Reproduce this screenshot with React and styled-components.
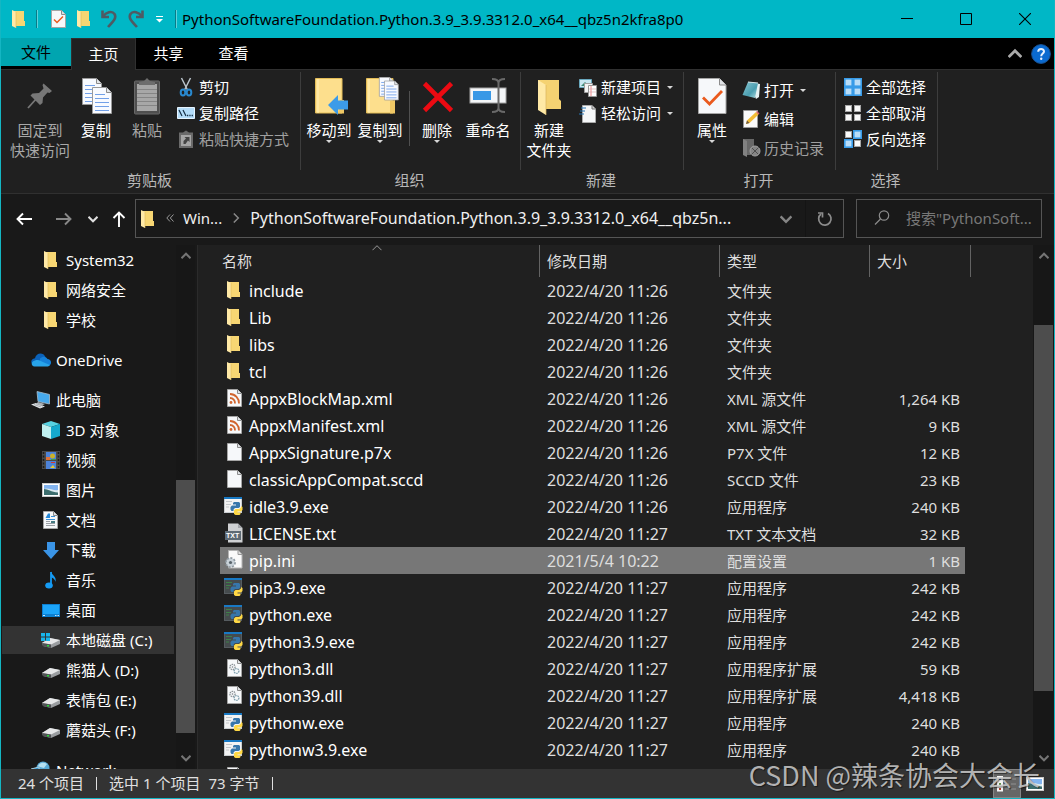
import React from "react";
import styled, { createGlobalStyle } from "styled-components";

const GlobalStyle = createGlobalStyle`
  *, *::before, *::after { box-sizing: border-box; }
  html, body { margin: 0; background: #191919; }
  body, button, input, table { font: 15px/20px "Noto Sans", "Noto Sans CJK SC", sans-serif; }
  button { margin: 0; padding: 0; border: 0; background: none; color: inherit; cursor: default; }
  svg { display: block; flex: none; }
`;

/* ---------- icons ---------- */

const Folder = ({ w = 13, h = 18 }) => (
  <svg width={w} height={h} viewBox="0 0 13 18">
    <path d="M0 1H12V11H13V16H0Z" fill="#f7d673" />
    <path d="M0 0L4 2V18L0 16Z" fill="#ffe9a6" />
    <path d="M4 2V18" stroke="#dcb85a" strokeWidth="0.6" />
  </svg>
);

const Page = ({ w = 15, h = 18, children }) => (
  <svg width={w} height={h} viewBox="0 0 15 18" preserveAspectRatio="none">
    <path d="M0.5 0.5H10.5L14.5 4.5V17.5H0.5Z" fill="#f6f8fa" stroke="#a5a5a5" />
    <path d="M10.5 0.5V4.5H14.5" fill="#dfe2e5" stroke="#8c8c8c" />
    {children}
  </svg>
);

const CheckPage = () => (
  <Page>
    <path d="M3 9.5L6 12.5L12 6.5" fill="none" stroke="#ea5a1d" strokeWidth="1.5" />
  </Page>
);

const PropertiesIcon = () => (
  <svg width="29" height="38" viewBox="0 0 29 38">
    <path d="M0.5 1.5H21.5L28 8V36.5H0.5Z" fill="#f6f8fa" stroke="#a5a5a5" />
    <path d="M21.5 1.5V8H28" fill="#dfe2e5" stroke="#8c8c8c" />
    <path d="M5 20.5L11.500 27L24 14" fill="none" stroke="#ea5a1d" strokeWidth="2.800" />
  </svg>
);

const Undo = ({ flip }) => (
  <svg width="16" height="18" viewBox="0 0 16 18">
    <g transform={flip ? "translate(16 0) scale(-1 1)" : undefined} fill="none" stroke="#4f5a63" strokeWidth="2.6">
      <path d="M1.5 0.5V7H8" />
      <path d="M2 6.5C5 2 11 0.5 13.5 4C16 8 12 11.5 7 17" />
    </g>
  </svg>
);

const CustomizeIcon = () => (
  <svg width="9" height="7" viewBox="0 0 9 7">
    <path d="M1 0.5H8" stroke="#fff" />
    <path d="M1 3H8L4.5 6.5Z" fill="#fff" />
  </svg>
);

const Minimize = () => (
  <svg width="12" height="12" viewBox="0 0 12 12"><path d="M0 5.5H12" stroke="#000" /></svg>
);
const Maximize = () => (
  <svg width="12" height="12" viewBox="0 0 12 12"><path d="M0.5 0.5H11.5V11.5H0.5Z" fill="none" stroke="#000" /></svg>
);
const Close = () => (
  <svg width="12" height="12" viewBox="0 0 12 12"><path d="M0 0L12 12M12 0L0 12" stroke="#000" strokeWidth="1.1" /></svg>
);

const Chevron = ({ dir = "down", color = "#ccc", size = 10, weight = 2 }) => {
  const turn = { down: 0, up: 180, right: 270 }[dir];
  return (
    <svg width={size} height={size} viewBox="0 0 10 10">
      <path d="M0.5 2.8L5 7.3L9.5 2.8" transform={`rotate(${turn} 5 5)`} fill="none" stroke={color} strokeWidth={weight} />
    </svg>
  );
};

const Help = () => (
  <svg width="20" height="20" viewBox="0 0 20 20">
    <circle cx="10" cy="10" r="9.4" fill="#0a6ad0" stroke="#1b5190" />
    <path d="M7.2 7.8C7.2 4 13 4.2 13 7.5C13 9.5 10.2 9.8 10.2 12.2" fill="none" stroke="#e8f2ff" strokeWidth="2" />
    <circle cx="10.2" cy="14.8" r="1.2" fill="#e8f2ff" />
  </svg>
);

const Pin = () => (
  <svg width="26" height="38" viewBox="0 0 26 38">
    <path d="M1 31L10 21" stroke="#777" strokeWidth="1.8" />
    <path d="M16.5 6.5L25 14L22.5 16L20.5 15.5L16 20.5L15.5 26L13 28L3.5 18.5L5.5 16.5L12 16L16.5 11.5L15.5 8Z" fill="#777" />
  </svg>
);

const DocLines = ({ x, y }) => (
  <g transform={`translate(${x} ${y})`}>
    <path d="M0.5 0.5H14.5L19.5 5.5V26.5H0.5Z" fill="#f8faff" stroke="#9a9a9a" />
    <path d="M14.5 0.5V5.5H19.5" fill="#e3e6ea" stroke="#8a8a8a" />
    <path d="M3 7.5H13M3 11.5H17M3 15.5H17M3 19.5H17M3 23.5H17" stroke="#72a0e8" strokeWidth="1.2" />
  </g>
);
const CopyIcon = () => (
  <svg width="34" height="38" viewBox="-2 0 34 38"><DocLines x={1} y={1} /><DocLines x={11} y={10} /></svg>
);

const PasteIcon = () => (
  <svg width="28" height="38" viewBox="0 0 28 38">
    <rect x="1.500" y="4" width="25" height="33" rx="1" fill="#4f4f4f" stroke="#686868" />
    <rect x="4" y="7" width="20" height="27" fill="#a7a7a7" />
    <path d="M4 12.5H24M4 16.5H24M4 20.5H24M4 24.5H24M4 28.5H24" stroke="#858585" />
    <path d="M6 8V5L11 4L14 1L17 4L22 5V8Z" fill="#6d6d6d" />
  </svg>
);

const Scissors = () => (
  <svg width="18" height="20" viewBox="0 0 18 20">
    <path d="M4.5 1L10.5 13M13.5 1L7.5 13" stroke="#b9c3cb" strokeWidth="1.5" />
    <ellipse cx="6" cy="15.5" rx="2.3" ry="3" fill="none" stroke="#2989cf" strokeWidth="2" />
    <ellipse cx="12" cy="15.5" rx="2.3" ry="3" fill="none" stroke="#2989cf" strokeWidth="2" />
  </svg>
);
const PathIcon = () => (
  <svg width="18" height="12" viewBox="0 0 18 12">
    <path d="M0.5 0.5H17.5V11.5H0.5Z" fill="#b4dcf8" stroke="#e6f4ff" />
    <path d="M2 3L5 9M6 3L9 9" stroke="#173045" strokeWidth="1.2" />
    <path d="M10 8.5H11.3M12.3 8.5H13.6M14.6 8.5H15.9" stroke="#173045" strokeWidth="1.4" />
  </svg>
);
const PasteLink = () => (
  <svg width="18" height="18" viewBox="0 0 18 18">
    <path d="M2 2.5H6L9 0.5L12 2.5H16V18H2Z" fill="#6a6a6a" />
    <path d="M4 5H14V16H4Z" fill="#a5a5a5" />
    <path d="M6.500 14V11L9 8.500L7.500 7H12.500V12L11 10.500L8.500 14Z" fill="#444" />
  </svg>
);

const BigFolderMove = () => (
  <svg width="38" height="38" viewBox="-4 0 38 38">
    <path d="M1.5 1.5H28V36H1.5Z" fill="#fddf8d" stroke="#e3bc57" />
    <path d="M4 2V36" stroke="#fff0b8" />
    <path d="M26 23H30V36.5H24" fill="#efc865" />
    <path d="M14 28L24 18V23.500H34V32.500H24V38Z" fill="#3c9be8" />
  </svg>
);
const BigFolderCopy = () => (
  <svg width="38" height="38" viewBox="-4 0 38 38">
    <path d="M1.500 1.500H28V36H1.500Z" fill="#fddf8d" stroke="#e3bc57" />
    <path d="M4 2V36" stroke="#fff0b8" />
    <path d="M25 24L30 23V36.500H25Z" fill="#efc865" />
    <g transform="translate(14 0) scale(0.73)"><DocLines x={0} y={0} /><DocLines x={7} y={5} /></g>
  </svg>
);
const DeleteIcon = () => (
  <svg width="32" height="38" viewBox="0 0 32 38">
    <path d="M3.500 6.500L30.500 33.500M30.500 6.500L3.500 33.500" stroke="#ec0a12" strokeWidth="4.600" />
  </svg>
);
const RenameIcon = () => (
  <svg width="38" height="38" viewBox="0 0 38 38">
    <rect x="1" y="11" width="36" height="15" fill="#f4f6f8" stroke="#a3a3a3" />
    <rect x="4" y="14" width="18" height="9" fill="#3898e6" />
    <path d="M29.500 4V33M23 2C27 2 29.500 3.500 29.500 6C29.500 3.500 32 2 36 2M23 35C27 35 29.500 33.500 29.500 31C29.500 33.500 32 35 36 35" fill="none" stroke="#696969" strokeWidth="2" />
  </svg>
);
const NewFolderIcon = () => (
  <svg width="26" height="38" viewBox="0 0 26 38">
    <path d="M2 3H23V22L25 24V32H2Z" fill="#f5d272" />
    <path d="M2 3L10 8V38L2 33Z" fill="#ffe9a6" />
    <path d="M10 8V38" stroke="#dab65b" strokeWidth="0.700" />
  </svg>
);
const NewItemIcon = () => (
  <svg width="18" height="19" viewBox="0 0 18 19">
    <path d="M0.500 1.500H12.500V9.500H0.500Z" fill="#c9e7f2" stroke="#68a7bd" />
    <path d="M2 8L6 4L10 8Z" fill="#3d8a75" />
    <path d="M5.500 5.500H13.500V14.500H5.500Z" fill="#f4f4f4" stroke="#a0a0a0" />
    <path d="M9.500 7.500H17.500V18.500H9.500Z" fill="#fff" stroke="#969696" />
    <path d="M12 8V18" stroke="#f0868a" />
    <path d="M10 11H17M10 14H17" stroke="#d8aeb0" strokeWidth="0.700" />
  </svg>
);
const EasyAccessIcon = () => (
  <svg width="18" height="19" viewBox="0 0 18 19">
    <path d="M3.500 1.500H13L16.500 5V18.500H3.500Z" fill="#f5f7f8" stroke="#aaa" />
    <path d="M13 1.500V5H16.500" fill="#d5d5d5" stroke="#777" />
    <path d="M2 4H7M1 7H6M0 10H5" stroke="#2776b5" strokeWidth="1.200" />
  </svg>
);
const OpenIcon = () => (
  <svg width="19" height="19" viewBox="0 0 19 19">
    <defs>
      <linearGradient id="bookFace" x2="1" y2="1"><stop stopColor="#8ac7d3" /><stop offset="0.600" stopColor="#4b9eb0" /><stop offset="1" stopColor="#b4e0e4" /></linearGradient>
    </defs>
    <path d="M7 1L18 3L17 16L14 18Z" fill="#e6f1f2" />
    <path d="M6 1L16 2L13 17L0.500 14Z" fill="url(#bookFace)" />
    <path d="M6 1L16 2" stroke="#d3e2e4" />
  </svg>
);
const EditIcon = () => (
  <svg width="18" height="18" viewBox="0 0 18 18">
    <path d="M1.500 0.500H15.500V17.500H1.500Z" fill="#fafafa" stroke="#999" />
    <path d="M4 14L5 10.500L14 2L16.500 4.500L7.500 13Z" fill="#f3bc35" />
    <path d="M14 2L15 1L17.500 3.500L16.500 4.500Z" fill="#dc5f68" />
    <path d="M4 14L5 10.500L7.500 13Z" fill="#6b5942" />
  </svg>
);
const HistoryIcon = () => (
  <svg width="19" height="18" viewBox="0 0 19 18">
    <path d="M1 0H12V16H1Z" fill="#686868" /><path d="M1 0L5 2V18L1 16Z" fill="#818181" />
    <circle cx="13" cy="12" r="5" fill="#858585" stroke="#a0a0a0" />
    <path d="M9.500 15.500L16.500 8.500M10 9L16 15" stroke="#4d4d4d" />
  </svg>
);
const Tiles = ({ on }) => (
  <svg width="18" height="18" viewBox="0 0 18 18">
    {[[0, 0], [9, 0], [0, 9], [9, 9]].map(([x, y], i) => (
      <rect key={i} x={x + (on[i] ? 0.8 : 1.5)} y={y + (on[i] ? 0.8 : 1.5)} width={on[i] ? 7.4 : 6} height={on[i] ? 7.4 : 6}
        fill={on[i] ? "#b9ddf8" : "#fafafa"} stroke={on[i] ? "#379be8" : "#a7a7a7"} strokeWidth={on[i] ? 1.6 : 1} />
    ))}
  </svg>
);

const Arrow = ({ dir, color = "#fff" }) => (
  <svg width="16" height="16" viewBox="0 0 16 16">
    <path d="M16 8H1.500M7 2.500L1.500 8L7 13.500" transform={`rotate(${{ left: 0, up: 90, right: 180 }[dir]} 8 8)`} fill="none" stroke={color} strokeWidth="1.900" />
  </svg>
);
const Refresh = () => (
  <svg width="16" height="16" viewBox="0 0 16 16">
    <path d="M11 2.500A6.200 6.200 0 1 1 4 3" fill="none" stroke="#8c8c8c" strokeWidth="1.700" />
    <path d="M1 2H5.500V6.500" fill="none" stroke="#8c8c8c" strokeWidth="1.700" />
  </svg>
);
const Magnifier = () => (
  <svg width="16" height="16" viewBox="0 0 16 16">
    <circle cx="10" cy="5.500" r="4.700" fill="none" stroke="#8c8c8c" strokeWidth="1.200" />
    <path d="M6.500 9L1 14.500" stroke="#8c8c8c" strokeWidth="1.300" />
  </svg>
);
const Earlier = () => (
  <svg width="8" height="8" viewBox="0 0 8 8"><path d="M4 0.500L0.800 4L4 7.500M7.500 0.500L4.300 4L7.500 7.500" fill="none" stroke="#999" /></svg>
);

const OneDriveIcon = () => (
  <svg width="20" height="14" viewBox="0 0 20 14">
    <path d="M4 12C-1 12 -1 5.500 4 5.200C5 0 12 -1.500 14.500 4L9 12Z" fill="#0b62b9" />
    <path d="M9 5.500C12 2.500 15.500 3.500 16.500 6C21 6 21.500 13 16.500 13H9Z" fill="#1580d8" />
    <path d="M3.500 13.500C-0.500 13 0 8 4 7.500C8 6 10 8.500 13 9.500L19 12C18 13.500 17 13.500 16 13.500Z" fill="#28a4ea" />
  </svg>
);
const PcIcon = () => (
  <svg width="20" height="18" viewBox="0 0 20 18">
    <path d="M6 0.500L18.500 3.500V13L7 10.500Z" fill="#46a9ec" stroke="#a9bdca" strokeWidth="0.800" />
    <path d="M7 11L14 13L11 14.500L5 13Z" fill="#a9afb4" />
    <path d="M0 13.500L5 12L14 15.500L9 17.500Z" fill="#e2e5e8" /><path d="M3 13.500L10 16M5 12.700L12 15.200" stroke="#8f969c" strokeWidth="0.700" />
  </svg>
);
const CubeIcon = () => (
  <svg width="18" height="18" viewBox="0 0 18 18">
    <path d="M9 0L18 3L9 6L0 3Z" fill="#57d2e2" /><path d="M0 3L9 6V18L0 15Z" fill="#c0f0f0" /><path d="M18 3L9 6V18L18 15Z" fill="#15a9cd" />
  </svg>
);
const VideoIcon = () => (
  <svg width="18" height="18" viewBox="0 0 18 18">
    <rect width="18" height="18" fill="#4a4a4a" />
    <path d="M1.500 1V18M16.500 1V18" stroke="#1c1c1c" strokeWidth="1.500" strokeDasharray="2 1.500" />
    <rect x="4" y="1" width="10" height="8" fill="#4d83d9" /><rect x="4" y="10" width="10" height="8" fill="#4d83d9" />
    <rect x="4" y="6" width="4" height="3" fill="#df7139" /><circle cx="10.500" cy="5" r="2.500" fill="#cab22c" />
    <path d="M9 8H14V9H9Z" fill="#3c9d4c" /><path d="M8 17L11 14L13 17Z" fill="#e9c832" /><path d="M9 11H13V12H9Z" fill="#d43932" />
  </svg>
);
const PictureIcon = () => (
  <svg width="18" height="14" viewBox="0 0 18 14">
    <rect x="0.500" y="0.500" width="17" height="13" fill="#fff" stroke="#c9c9c9" />
    <rect x="2" y="2" width="14" height="10" fill="#83b4ef" /><path d="M2 6C5 4 12 8 16 7V12H2Z" fill="#dcebf1" />
    <path d="M2 6C6 6 9 9 16 9.500V12H2Z" fill="#3d6e6e" />
  </svg>
);
const DocumentIcon = () => (
  <Page>
    <path d="M2.500 7L5 2.500H7V7Z" fill="#2588d8" /><path d="M8 5.500H12M3 8.500H12" stroke="#3990d8" />
    <path d="M3 10.500H7M3 12.500H12M3 14.500H12" stroke="#9ba0a5" /><rect x="8" y="10" width="4" height="2" fill="#467c83" />
  </Page>
);
const DownloadIcon = () => (
  <svg width="16" height="17" viewBox="0 0 16 17"><path d="M4 0H12V8H16L8 17L0 8H4Z" fill="#3a94e6" /></svg>
);
const MusicIcon = () => (
  <svg width="12" height="18" viewBox="0 0 12 18">
    <ellipse cx="4" cy="14.500" rx="3.800" ry="3" fill="#159bf4" /><path d="M6 1V15" stroke="#159bf4" strokeWidth="1.800" />
    <path d="M6 0C6 4 12 5 10.500 11C10 7.500 7 7 6 6Z" fill="#159bf4" />
  </svg>
);
const DesktopIcon = () => (
  <svg width="18" height="13" viewBox="0 0 18 13">
    <rect width="18" height="13" fill="#0d7fd0" /><rect x="1" y="1" width="16" height="9" fill="#1ca5fa" />
    <path d="M1 11.500H3M13 11.500H14.500M15.500 11.500H17" stroke="#c8e9ff" />
  </svg>
);
const DriveIcon = ({ system }) => (
  <svg width="20" height="18" viewBox="-1 -2 20 18">
    <path d="M0 10L8 5L18 7V11L9 15L1 13Z" fill="#9a9da0" /><path d="M0 10L8 5L18 7L9 11.500Z" fill="#e6e7e8" />
    <path d="M0 10L9 11.500V15L1 13Z" fill="#505355" /><rect x="5" y="12" width="2" height="1.500" fill="#2bd839" />
    {system && <path d="M-1 0H3V3.500H-1ZM4 0H8V3.500H4ZM-1 4.500H3V8H-1ZM4 4.500H8V8H4Z" fill="#17b5ec" />}
  </svg>
);
const NetworkIcon = () => (
  <svg width="20" height="18" viewBox="0 0 20 18">
    <circle cx="12" cy="7" r="6.500" fill="#58a9d4" /><path d="M7 5C9 1 13 1 16 3L13 7L9 6Z" fill="#b5e0f0" />
    <path d="M0 8L8 6V15L1 17Z" fill="#2f94ce" stroke="#aecfde" />
  </svg>
);

const PythonMark = () => (
  <g>
    <path d="M10 5H15L16 6V10L14.500 11H11L9.500 12.500V14H7.500L6.500 12.500V10L8 8.500H12V7.500H9V6Z" fill="#3776ab" />
    <path d="M17 9L18.500 10V13L17 14.500H13.500V15.500H16.500V17L15.500 18H11.500L10 17V13.500L11.500 12H15L17 10.500Z" fill="#ffd845" />
  </g>
);
const ExeIcon = ({ dark }) => (
  <svg width="20" height="18" viewBox="0 0 20 18">
    <rect x="0.500" y="0.500" width="17" height="15" fill={dark ? "#454b4d" : "#f2f2f2"} stroke={dark ? "#565c60" : "#c9cdd0"} />
    <path d="M0 1H18" stroke="#1879c4" strokeWidth="2" />
    <path d="M2 4.500H8M2 7.500H7M2 10H5" stroke={dark ? "#3e8049" : "#c3c6c9"} />
    <PythonMark />
  </svg>
);
const XmlIcon = () => (
  <Page>
    <g fill="none" stroke="#d1652f" strokeWidth="1.800"><path d="M3 5A9 9 0 0 1 12 14.500M3 9A5 5 0 0 1 8 14.500" /></g>
    <circle cx="4" cy="13.500" r="1.400" fill="#d1652f" />
  </Page>
);
const TxtLabel = styled.text`
  font: 700 7px/1 "Liberation Sans", sans-serif;
  fill: #fff;
`;
const TxtIcon = () => (
  <svg width="18" height="20" viewBox="0 0 18 20">
    <path d="M3 0.500H13L17.500 5V19.500H3Z" fill="#cfd1d3" /><path d="M13 0.500V5H17.500" fill="#a3a6aa" />
    <rect x="0" y="8" width="16" height="9" fill="#5d6a75" /><TxtLabel x="1" y="15">TXT</TxtLabel>
  </svg>
);
const IniIcon = () => (
  <svg width="18" height="19" viewBox="0 0 18 19">
    <path d="M3.500 0.500H13L17 4.500V18H3.500Z" fill="#fafafa" stroke="#b5b5b5" /><path d="M13 0.500V4.500H17" fill="#ddd" stroke="#999" />
    <circle cx="5.500" cy="12.500" r="4.600" fill="#c9d2d9" stroke="#8e989f" strokeWidth="1.600" strokeDasharray="2 1.500" />
    <circle cx="5.500" cy="12.500" r="1.600" fill="#59646b" />
  </svg>
);
const DllIcon = () => (
  <Page>
    <g fill="none" strokeWidth="1.300"><circle cx="5.500" cy="8" r="2.600" stroke="#8b9297" strokeDasharray="1.500 0.700" /><circle cx="9.500" cy="12" r="2.400" stroke="#7e9fad" strokeDasharray="1.500 0.700" /></g>
    <circle cx="5.500" cy="8" r="0.800" fill="#7b8287" />
  </Page>
);
const DetailsView = () => (
  <svg width="20" height="16" viewBox="0 0 20 16">
    {[0, 5, 10].map((y, i) => (
      <g key={y}><rect x="0" y={y} width="6" height="5.500" fill="#f4f4f4" /><rect x="2" y={y + 2} width="2" height="2" fill={["#3d6eac", "#5d8d40", "#b43c2c"][i]} /><path d={`M8 ${y + 3}H12M14 ${y + 3}H19`} stroke="#919191" /></g>
    ))}
  </svg>
);

/* ---------- frame ---------- */

const Window = styled.div`
  position: relative;
  display: flex;
  flex-direction: column;
  height: 100vh;
  border: 1px solid #14b6c3;
  border-top: 0;
  background: #191919;
  color: #fff;
  overflow: hidden;
`;

const TitleBar = styled.header`
  flex: none;
  display: flex;
  align-items: center;
  height: 38px;
  padding-left: 11px;
  background: #00b7c6;
  color: #000;
`;
const QuickTools = styled.div`
  display: flex;
  align-items: center;
  gap: 11px;
  margin-right: 3px;
`;
const TitleRule = styled.span`
  width: 2px;
  height: 18px;
  margin-right: 2px;
  border-left: 1px solid #087c88;
  border-right: 1px solid #60d1da;
`;
const WindowTitle = styled.h1`
  flex: 1;
  margin: 0;
  font-size: 15px;
  font-weight: 400;
  white-space: nowrap;
`;
const CaptionButton = styled.button`
  display: flex;
  align-items: center;
  justify-content: center;
  width: 59px;
  height: 38px;
`;

const TabBar = styled.nav`
  flex: none;
  display: flex;
  height: 32px;
  background: #000;
  border-bottom: 1px solid #303030;
`;
const Tab = styled.button`
  width: 65px;
  height: ${p => (p.$kind === "file" ? 28 : 32)}px;
  padding-bottom: ${p => (p.$kind === "file" ? 0 : 2)}px;
  ${p => p.$kind === "file" && "width: 70px; background: #00a5b0; color: #000;"}
  ${p => p.$kind === "active" && "background: #202020; border: 1px solid #303030; border-bottom: 0;"}
`;
const TabTools = styled.div`
  display: flex;
  align-items: center;
  gap: 9px;
  margin-left: auto;
  padding-right: 3px;
`;

/* ---------- ribbon ---------- */

const Ribbon = styled.section`
  flex: none;
  display: flex;
  height: 124px;
  padding-top: 2px;
  background: #202020;
  border-bottom: 1px solid #303030;
`;
const Group = styled.div`
  display: flex;
  flex-direction: column;
  width: ${p => p.$width}px;
`;
const GroupTools = styled.div`
  display: flex;
  height: 98px;
  padding: 5px 0 0 ${p => p.$inset || 3}px;
  border-right: 1px solid #3d3d3d;
`;
const GroupLabel = styled.div`
  padding-right: 3px;
  color: #b8b8b8;
  text-align: center;
  line-height: 20px;
`;
const BigButton = styled.button`
  flex: none;
  display: flex;
  flex-direction: column;
  align-items: center;
  width: ${p => p.$width || 50}px;
  height: 86px;
  margin-right: 1px;
  color: ${p => (p.disabled ? "#a8a8a8" : "#fff")};
  white-space: nowrap;
  svg + span { margin-top: 5px; }
`;
const SmallList = styled.div`
  display: flex;
  flex-direction: column;
  gap: ${p => p.$gap || 6}px;
  padding: ${p => p.$top || 0}px 0 0 ${p => p.$inset || 4}px;
`;
const SmallButton = styled.button`
  display: flex;
  align-items: center;
  gap: 3px;
  height: 20px;
  color: ${p => (p.disabled ? "#a0a0a0" : "#fff")};
  white-space: nowrap;
`;
const SmallIcon = styled.span`
  display: flex;
  width: 19px;
`;
const Caret = styled.i`
  width: 0;
  border: 3px solid transparent;
  border-top-color: #d8d8d8;
  border-bottom: 0;
  margin-left: ${p => (p.$side ? 3 : 0)}px;
`;
const ToolRule = styled.span`
  width: 1px;
  height: 55px;
  margin: 14px 2px 0 3px;
  background: #505050;
`;

/* ---------- address ---------- */

const AddressRow = styled.div`
  flex: none;
  display: flex;
  align-items: center;
  height: 51px;
  padding: 0 12px 2px 3px;
`;
const NavButton = styled.button`
  flex: none;
  display: flex;
  align-items: center;
  justify-content: center;
  width: ${p => p.$width}px;
  height: 32px;
`;
const AddressBox = styled.div`
  flex: 1;
  min-width: 0;
  display: flex;
  align-items: center;
  height: 39px;
  margin-right: 12px;
  padding-left: 5px;
  border: 1px solid #555;
`;
const Crumbs = styled.nav`
  flex: 1;
  min-width: 0;
  display: flex;
  align-items: center;
  gap: 9px;
  padding: 0 0 2px 12px;
  white-space: nowrap;
`;
const Crumb = styled.a`
  color: #f0f0f0;
  font-size: ${p => (p.$current ? 16 : 15)}px;
  text-decoration: none;
`;
const AddressButton = styled.button`
  display: flex;
  align-items: center;
  justify-content: center;
  width: 38px;
  height: 37px;
  border-left: ${p => (p.$ruled ? "1px solid #141414" : "0")};
`;
const SearchBox = styled.label`
  display: flex;
  align-items: center;
  gap: 16px;
  width: 186px;
  height: 39px;
  padding: 0 0 2px 17px;
  border: 1px solid #555;
`;
const SearchInput = styled.input`
  flex: 1;
  min-width: 0;
  padding: 0;
  border: 0;
  outline: 0;
  background: none;
  color: #fff;
  &::placeholder { color: #777; opacity: 1; }
`;

/* ---------- body ---------- */

const Body = styled.div`
  flex: 1;
  min-height: 0;
  display: flex;
`;
const Tree = styled.nav`
  flex: none;
  display: flex;
  flex-direction: column;
  width: 175px;
  padding-right: 2px;
  overflow: hidden;
`;
const TreeItem = styled.a`
  flex: none;
  display: flex;
  align-items: center;
  gap: 5px;
  height: 28px;
  margin: ${p => (p.$spaced ? 11 : 1)}px 0 1px 1px;
  padding-left: ${p => (p.$root ? 28 : 38)}px;
  background: ${p => (p.$selected ? "#333" : "none")};
  color: #fff;
  text-decoration: none;
  white-space: nowrap;
`;
const TreeIcon = styled.span`
  display: flex;
  justify-content: center;
  width: 21px;
`;
const ScrollTrack = styled.div`
  flex: none;
  display: flex;
  flex-direction: column;
  align-items: center;
  width: ${p => p.$width}px;
  padding: 6px 0;
  background: #171717;
`;
const ScrollGap = styled.div`
  flex: ${p => p.$grow} 1 0;
`;
const Thumb = styled.div`
  flex: ${p => p.$grow} 1 0;
  width: 19px;
  background: #4d4d4d;
`;
const Listing = styled.main`
  position: relative;
  flex: 1;
  min-width: 0;
  margin-left: 2px;
  padding-left: 22px;
  border-left: 1px solid #2b2b2b;
  background: #202020;
  overflow: hidden;
`;
const SortMark = styled.span`
  position: absolute;
  top: -2px;
  left: 174px;
`;
const FileTable = styled.table`
  width: 751px;
  table-layout: fixed;
  border-collapse: separate;
  border-spacing: 0;
  white-space: nowrap;
`;
const Head = styled.th`
  height: 32px;
  padding: 0 0 0 ${p => (p.$first ? 2 : 7)}px;
  border-right: 1px solid #636363;
  color: #dedede;
  font-weight: 400;
  text-align: left;
`;
const FileRow = styled.tr`
  td { background: ${p => (p.$selected ? "#777" : "none")}; }
  td:last-child { background: none; }
`;
const Cell = styled.td`
  height: 27px;
  padding: 0 5px 0 7px;
  color: #dedede;
  font-size: ${p => (p.$numeric ? 16 : 15)}px;
  text-align: ${p => (p.$right ? "right" : "left")};
`;
const Spacer = styled.td`
  padding: 0;
`;
const FileName = styled.span`
  display: flex;
  align-items: center;
  gap: 5px;
  height: 27px;
  color: #fff;
  font-size: 16px;
`;
const NameCell = styled(Cell)`
  padding: 0 0 0 4px;
`;
const FileIcon = styled.span`
  display: flex;
  justify-content: ${p => (p.$folder ? "flex-start" : "center")};
  width: 20px;
  padding: 0 0 2px ${p => (p.$folder ? 3 : 0)}px;
`;

const StatusBar = styled.footer`
  flex: none;
  display: flex;
  align-items: center;
  height: 29px;
  padding: 0 10px 0 17px;
  background: #333;
  color: #e0e0e0;
`;
const StatusRule = styled.span`
  width: 1px;
  height: 13px;
  margin: 0 12px;
  background: #e0e0e0;
`;
const StatusText = styled.span`
  margin-right: ${p => p.$after || 0}px;
  padding-bottom: 2px;
`;
const ViewButtons = styled.div`
  display: flex;
  align-items: center;
  gap: 5px;
  margin-left: auto;
`;
const ViewButton = styled.button`
  display: flex;
  align-items: center;
  justify-content: center;
  width: ${p => (p.$on ? 28 : 18)}px;
  height: 29px;
  background: ${p => (p.$on ? "#666" : "none")};
  border: ${p => (p.$on ? "1px solid #858585" : "0")};
`;
const Watermark = styled.div`
  position: absolute;
  right: 14px;
  bottom: 9px;
  color: rgba(205, 205, 205, 0.85);
  font: 400 27px/28px "Noto Sans CJK SC", sans-serif;
  text-shadow: 1px 1px 1px rgba(0, 0, 0, 0.5);
  white-space: nowrap;
  pointer-events: none;
`;

/* ---------- data ---------- */

const TREE = [
  ["System32", <Folder />],
  ["网络安全", <Folder />],
  ["学校", <Folder />],
  ["OneDrive", <OneDriveIcon />, "root"],
  ["此电脑", <PcIcon />, "root"],
  ["3D 对象", <CubeIcon />],
  ["视频", <VideoIcon />],
  ["图片", <PictureIcon />],
  ["文档", <DocumentIcon />],
  ["下载", <DownloadIcon />],
  ["音乐", <MusicIcon />],
  ["桌面", <DesktopIcon />],
  ["本地磁盘 (C:)", <DriveIcon system />, "selected"],
  ["熊猫人 (D:)", <DriveIcon />],
  ["表情包 (E:)", <DriveIcon />],
  ["蘑菇头 (F:)", <DriveIcon />],
  ["Network", <NetworkIcon />, "root"],
];

const FILE_KINDS = {
  folder: ["文件夹", <Folder />],
  xml: ["XML 源文件", <XmlIcon />],
  p7x: ["P7X 文件", <Page />],
  sccd: ["SCCD 文件", <Page />],
  exe: ["应用程序", <ExeIcon />],
  console: ["应用程序", <ExeIcon dark />],
  txt: ["TXT 文本文档", <TxtIcon />],
  ini: ["配置设置", <IniIcon />],
  dll: ["应用程序扩展", <DllIcon />],
};

const FILES = [
  ["include", "2022/4/20 11:26", "folder", ""],
  ["Lib", "2022/4/20 11:26", "folder", ""],
  ["libs", "2022/4/20 11:26", "folder", ""],
  ["tcl", "2022/4/20 11:26", "folder", ""],
  ["AppxBlockMap.xml", "2022/4/20 11:26", "xml", "1,264 KB"],
  ["AppxManifest.xml", "2022/4/20 11:26", "xml", "9 KB"],
  ["AppxSignature.p7x", "2022/4/20 11:26", "p7x", "12 KB"],
  ["classicAppCompat.sccd", "2022/4/20 11:26", "sccd", "23 KB"],
  ["idle3.9.exe", "2022/4/20 11:26", "exe", "240 KB"],
  ["LICENSE.txt", "2022/4/20 11:27", "txt", "32 KB"],
  ["pip.ini", "2021/5/4 10:22", "ini", "1 KB"],
  ["pip3.9.exe", "2022/4/20 11:27", "console", "242 KB"],
  ["python.exe", "2022/4/20 11:27", "console", "242 KB"],
  ["python3.9.exe", "2022/4/20 11:27", "console", "242 KB"],
  ["python3.dll", "2022/4/20 11:27", "dll", "59 KB"],
  ["python39.dll", "2022/4/20 11:27", "dll", "4,418 KB"],
  ["pythonw.exe", "2022/4/20 11:27", "exe", "240 KB"],
  ["pythonw3.9.exe", "2022/4/20 11:27", "exe", "240 KB"],
];

/* ---------- composed parts ---------- */

const Big = ({ icon, lines, caret, disabled, width }) => (
  <BigButton disabled={disabled} $width={width}>
    {icon}
    {lines.map(line => <span key={line}>{line}</span>)}
    {caret && <Caret />}
  </BigButton>
);

const Small = ({ icon, label, caret, disabled }) => (
  <SmallButton disabled={disabled}>
    <SmallIcon>{icon}</SmallIcon>
    <span>{label}</span>
    {caret && <Caret $side />}
  </SmallButton>
);

const Scrollbar = ({ width, before, thumb, after }) => (
  <ScrollTrack $width={width}>
    <Chevron dir="up" color="#757575" />
    <ScrollGap $grow={before} />
    <Thumb $grow={thumb} />
    <ScrollGap $grow={after} />
    <Chevron color="#757575" />
  </ScrollTrack>
);

export default function App() {
  return (
    <Window>
      <GlobalStyle />
      <TitleBar>
        <QuickTools>
          <Folder />
          <TitleRule />
          <CheckPage />
          <Folder />
          <Undo />
          <Undo flip />
          <CustomizeIcon />
          <TitleRule />
        </QuickTools>
        <WindowTitle>PythonSoftwareFoundation.Python.3.9_3.9.3312.0_x64__qbz5n2kfra8p0</WindowTitle>
        <CaptionButton aria-label="最小化"><Minimize /></CaptionButton>
        <CaptionButton aria-label="最大化"><Maximize /></CaptionButton>
        <CaptionButton aria-label="关闭"><Close /></CaptionButton>
      </TitleBar>

      <TabBar>
        <Tab $kind="file">文件</Tab>
        <Tab $kind="active">主页</Tab>
        <Tab>共享</Tab>
        <Tab>查看</Tab>
        <TabTools>
          <Chevron dir="up" color="#aaa" size={14} />
          <Help />
        </TabTools>
      </TabBar>

      <Ribbon>
        <Group $width={300}>
          <GroupTools $inset={9}>
            <Big width={60} icon={<Pin />} lines={["固定到", "快速访问"]} disabled />
            <Big icon={<CopyIcon />} lines={["复制"]} />
            <Big icon={<PasteIcon />} lines={["粘贴"]} disabled />
            <SmallList>
              <Small icon={<Scissors />} label="剪切" />
              <Small icon={<PathIcon />} label="复制路径" />
              <Small icon={<PasteLink />} label="粘贴快捷方式" disabled />
            </SmallList>
          </GroupTools>
          <GroupLabel>剪贴板</GroupLabel>
        </Group>
        <Group $width={220}>
          <GroupTools>
            <Big icon={<BigFolderMove />} lines={["移动到"]} caret />
            <Big icon={<BigFolderCopy />} lines={["复制到"]} caret />
            <ToolRule />
            <Big icon={<DeleteIcon />} lines={["删除"]} caret />
            <Big icon={<RenameIcon />} lines={["重命名"]} />
          </GroupTools>
          <GroupLabel>组织</GroupLabel>
        </Group>
        <Group $width={163}>
          <GroupTools>
            <Big icon={<NewFolderIcon />} lines={["新建", "文件夹"]} />
            <SmallList>
              <Small icon={<NewItemIcon />} label="新建项目" caret />
              <Small icon={<EasyAccessIcon />} label="轻松访问" caret />
            </SmallList>
          </GroupTools>
          <GroupLabel>新建</GroupLabel>
        </Group>
        <Group $width={152}>
          <GroupTools>
            <Big icon={<PropertiesIcon />} lines={["属性"]} caret />
            <SmallList $gap={9} $top={3}>
              <Small icon={<OpenIcon />} label="打开" caret />
              <Small icon={<EditIcon />} label="编辑" />
              <Small icon={<HistoryIcon />} label="历史记录" disabled />
            </SmallList>
          </GroupTools>
          <GroupLabel>打开</GroupLabel>
        </Group>
        <Group $width={102}>
          <GroupTools $inset={4}>
            <SmallList>
              <Small icon={<Tiles on={[1, 1, 1, 1]} />} label="全部选择" />
              <Small icon={<Tiles on={[0, 0, 0, 0]} />} label="全部取消" />
              <Small icon={<Tiles on={[0, 1, 1, 0]} />} label="反向选择" />
            </SmallList>
          </GroupTools>
          <GroupLabel>选择</GroupLabel>
        </Group>
      </Ribbon>

      <AddressRow>
        <NavButton $width={40} aria-label="后退"><Arrow dir="left" /></NavButton>
        <NavButton $width={39} aria-label="前进"><Arrow dir="right" color="#888" /></NavButton>
        <NavButton $width={20} aria-label="最近浏览的位置"><Chevron color="#e0e0e0" /></NavButton>
        <NavButton $width={32} aria-label="上移"><Arrow dir="up" /></NavButton>
        <AddressBox>
          <Folder />
          <Crumbs>
            <Earlier />
            <Crumb href="#windowsapps">Win...</Crumb>
            <Chevron dir="right" color="#888" weight={1.5} />
            <Crumb $current href="#python">PythonSoftwareFoundation.Python.3.9_3.9.3312.0_x64__qbz5n...</Crumb>
          </Crumbs>
          <AddressButton aria-label="展开"><Chevron color="#858585" size={12} /></AddressButton>
          <AddressButton $ruled aria-label="刷新"><Refresh /></AddressButton>
        </AddressBox>
        <SearchBox>
          <Magnifier />
          <SearchInput type="text" aria-label="搜索" placeholder={'搜索"PythonSoft...'} />
        </SearchBox>
      </AddressRow>

      <Body>
        <Tree>
          {TREE.map(([label, icon, state]) => (
            <TreeItem key={label} href={`#${label}`} $root={state === "root"} $spaced={state === "root"} $selected={state === "selected"}>
              <TreeIcon>{icon}</TreeIcon>
              {label}
            </TreeItem>
          ))}
        </Tree>
        <Scrollbar width={19} before={219} thumb={253} after={20} />
        <Listing>
          <SortMark><Chevron dir="up" color="#999" weight={1} /></SortMark>
          <FileTable>
            <colgroup>
              <col width="320" />
              <col width="180" />
              <col width="150" />
              <col width="95" />
              <col width="6" />
            </colgroup>
            <thead>
              <tr>
                <Head $first>名称</Head>
                <Head>修改日期</Head>
                <Head>类型</Head>
                <Head colSpan={2}>大小</Head>
              </tr>
            </thead>
            <tbody>
              {FILES.map(([name, date, kind, size]) => (
                <FileRow key={name} $selected={name === "pip.ini"}>
                  <NameCell>
                    <FileName>
                      <FileIcon $folder={kind === "folder"}>{FILE_KINDS[kind][1]}</FileIcon>
                      {name}
                    </FileName>
                  </NameCell>
                  <Cell $numeric>{date}</Cell>
                  <Cell>{FILE_KINDS[kind][0]}</Cell>
                  <Cell $right>{size}</Cell>
                  <Spacer />
                </FileRow>
              ))}
              <FileRow>
                <NameCell colSpan={5}>
                  <FileName><FileIcon><Page /></FileIcon></FileName>
                </NameCell>
              </FileRow>
            </tbody>
          </FileTable>
        </Listing>
        <Scrollbar width={21} before={64} thumb={366} after={62} />
      </Body>

      <StatusBar>
        <StatusText>24 个项目</StatusText>
        <StatusRule />
        <StatusText $after={8}>选中 1 个项目</StatusText>
        <StatusText>73 字节</StatusText>
        <StatusRule />
        <ViewButtons>
          <ViewButton $on aria-label="详细信息"><DetailsView /></ViewButton>
          <ViewButton aria-label="大缩略图"><PictureIcon /></ViewButton>
        </ViewButtons>
      </StatusBar>
      <Watermark>CSDN @辣条协会大会长</Watermark>
    </Window>
  );
}
